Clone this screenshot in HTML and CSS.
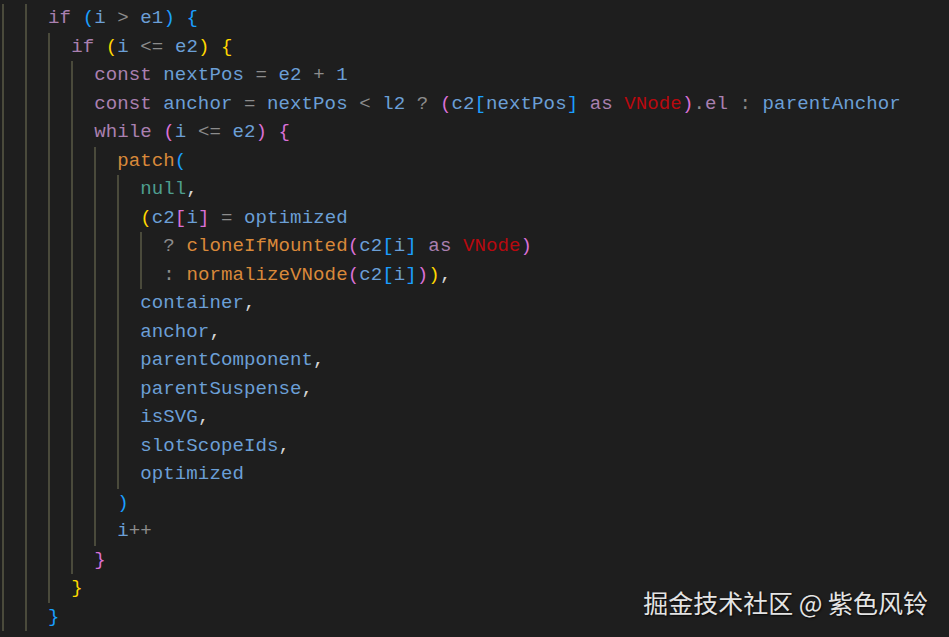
FILE: index.html
```html
<!DOCTYPE html>
<html>
<head>
<meta charset="utf-8">
<link rel="stylesheet" href="styles.css">
</head>
<body>
<div class="editor">
<div class="line"><span class="g">  </span><span class="g">  </span><span class="k">if</span> <span class="b1">(</span><span class="v">i</span> <span class="o">&gt;</span> <span class="v">e1</span><span class="b1">)</span> <span class="b1">{</span></div>
<div class="line"><span class="g">  </span><span class="g">  </span><span class="g">  </span><span class="k">if</span> <span class="b2">(</span><span class="v">i</span> <span class="o">&lt;=</span> <span class="v">e2</span><span class="b2">)</span> <span class="b2">{</span></div>
<div class="line"><span class="g">  </span><span class="g">  </span><span class="g">  </span><span class="g">  </span><span class="k">const</span> <span class="v">nextPos</span> <span class="o">=</span> <span class="v">e2</span> <span class="o">+</span> <span class="v">1</span></div>
<div class="line"><span class="g">  </span><span class="g">  </span><span class="g">  </span><span class="g">  </span><span class="k">const</span> <span class="v">anchor</span> <span class="o">=</span> <span class="v">nextPos</span> <span class="o">&lt;</span> <span class="v">l2</span> <span class="o">?</span> <span class="b3">(</span><span class="v">c2</span><span class="b1">[</span><span class="v">nextPos</span><span class="b1">]</span> <span class="k">as</span> <span class="t">VNode</span><span class="b3">)</span><span class="o">.</span><span class="k">el</span> <span class="o">:</span> <span class="v">parentAnchor</span></div>
<div class="line"><span class="g">  </span><span class="g">  </span><span class="g">  </span><span class="g">  </span><span class="k">while</span> <span class="b3">(</span><span class="v">i</span> <span class="o">&lt;=</span> <span class="v">e2</span><span class="b3">)</span> <span class="b3">{</span></div>
<div class="line"><span class="g">  </span><span class="g">  </span><span class="g">  </span><span class="g">  </span><span class="g">  </span><span class="f">patch</span><span class="b1">(</span></div>
<div class="line"><span class="g">  </span><span class="g">  </span><span class="g">  </span><span class="g">  </span><span class="g">  </span><span class="g">  </span><span class="n">null</span><span class="p">,</span></div>
<div class="line"><span class="g">  </span><span class="g">  </span><span class="g">  </span><span class="g">  </span><span class="g">  </span><span class="g">  </span><span class="b2">(</span><span class="v">c2</span><span class="b3">[</span><span class="v">i</span><span class="b3">]</span> <span class="o">=</span> <span class="v">optimized</span></div>
<div class="line"><span class="g">  </span><span class="g">  </span><span class="g">  </span><span class="g">  </span><span class="g">  </span><span class="g">  </span><span class="g">  </span><span class="o">?</span> <span class="f">cloneIfMounted</span><span class="b3">(</span><span class="v">c2</span><span class="b1">[</span><span class="v">i</span><span class="b1">]</span> <span class="k">as</span> <span class="t">VNode</span><span class="b3">)</span></div>
<div class="line"><span class="g">  </span><span class="g">  </span><span class="g">  </span><span class="g">  </span><span class="g">  </span><span class="g">  </span><span class="g">  </span><span class="o">:</span> <span class="f">normalizeVNode</span><span class="b3">(</span><span class="v">c2</span><span class="b1">[</span><span class="v">i</span><span class="b1">]</span><span class="b3">)</span><span class="b2">)</span><span class="p">,</span></div>
<div class="line"><span class="g">  </span><span class="g">  </span><span class="g">  </span><span class="g">  </span><span class="g">  </span><span class="g">  </span><span class="v">container</span><span class="p">,</span></div>
<div class="line"><span class="g">  </span><span class="g">  </span><span class="g">  </span><span class="g">  </span><span class="g">  </span><span class="g">  </span><span class="v">anchor</span><span class="p">,</span></div>
<div class="line"><span class="g">  </span><span class="g">  </span><span class="g">  </span><span class="g">  </span><span class="g">  </span><span class="g">  </span><span class="v">parentComponent</span><span class="p">,</span></div>
<div class="line"><span class="g">  </span><span class="g">  </span><span class="g">  </span><span class="g">  </span><span class="g">  </span><span class="g">  </span><span class="v">parentSuspense</span><span class="p">,</span></div>
<div class="line"><span class="g">  </span><span class="g">  </span><span class="g">  </span><span class="g">  </span><span class="g">  </span><span class="g">  </span><span class="v">isSVG</span><span class="p">,</span></div>
<div class="line"><span class="g">  </span><span class="g">  </span><span class="g">  </span><span class="g">  </span><span class="g">  </span><span class="g">  </span><span class="v">slotScopeIds</span><span class="p">,</span></div>
<div class="line"><span class="g">  </span><span class="g">  </span><span class="g">  </span><span class="g">  </span><span class="g">  </span><span class="g">  </span><span class="v">optimized</span></div>
<div class="line"><span class="g">  </span><span class="g">  </span><span class="g">  </span><span class="g">  </span><span class="g">  </span><span class="b1">)</span></div>
<div class="line"><span class="g">  </span><span class="g">  </span><span class="g">  </span><span class="g">  </span><span class="g">  </span><span class="v">i</span><span class="o">++</span></div>
<div class="line"><span class="g">  </span><span class="g">  </span><span class="g">  </span><span class="g">  </span><span class="b3">}</span></div>
<div class="line"><span class="g">  </span><span class="g">  </span><span class="g">  </span><span class="b2">}</span></div>
<div class="line"><span class="g">  </span><span class="g">  </span><span class="b1">}</span></div>
</div>
<div class="watermark">掘金技术社区 @ 紫色风铃</div>
</body>
</html>
```

FILE: styles.css
```css
html, body {
  margin: 0;
  padding: 0;
  background: #1e1e1e;
  width: 949px;
  height: 637px;
  overflow: hidden;
}

body {
  position: relative;
}

.editor {
  padding: 4px 0 0 2px;
  font-family: "Liberation Mono", "DejaVu Sans Mono", monospace;
  font-size: 19.08px;
  line-height: 28.5px;
  letter-spacing: 0.07px;
  color: #cccccc;
}

.line {
  white-space: pre;
  height: 28.5px;
}

.g {
  display: inline-block;
  box-shadow: inset 2px 0 0 #4a4a3b;
  height: 28.5px;
  vertical-align: top;
}

.k { color: #aa80b0; }
.v { color: #6b9fd6; }
.o { color: #8c8c8c; }
.f { color: #d9893a; }
.n { color: #4e9d8e; }
.t { color: #b8090f; }
.p { color: #d4d4d4; }
.b1 { color: #1a9fff; }
.b2 { color: #ffd700; }
.b3 { color: #da70d6; }

.watermark {
  position: absolute;
  right: 21px;
  bottom: 21px;
  font-family: "Noto Sans CJK SC", "Noto Sans", sans-serif;
  font-size: 25px;
  line-height: 28px;
  color: #e4e4e4;
  text-shadow: 1px 1px 2px rgba(0, 0, 0, 0.8);
}
```
